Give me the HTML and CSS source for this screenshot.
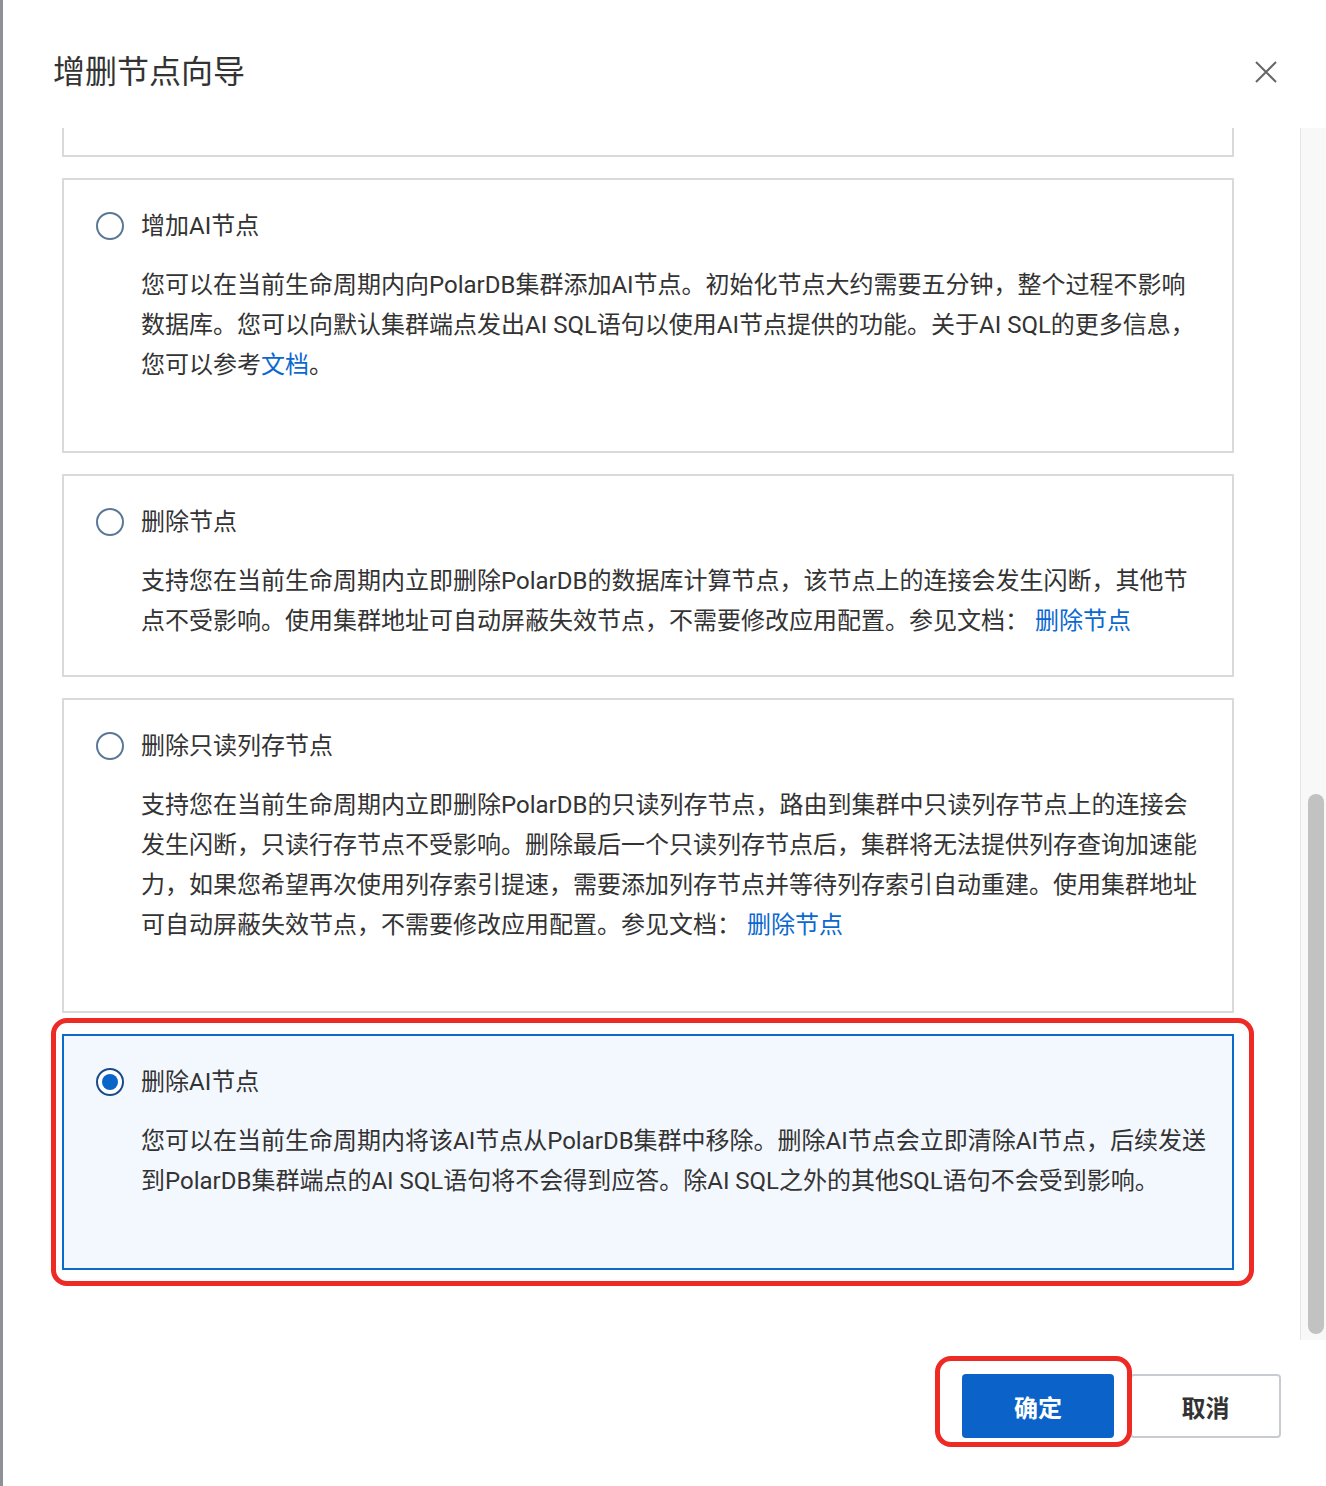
FILE: index.html
```html
<!DOCTYPE html>
<html lang="zh-CN">
<head>
    <meta charset="UTF-8">
    <meta name="viewport" content="width=device-width, initial-scale=1.0">
    <title>增删节点向导</title>
    <link rel="stylesheet" href="styles.css">
</head>
<body>
    <div class="modal">
        <div class="modal-header">
            <h2>增删节点向导</h2>
            <button class="close-btn" aria-label="关闭">
                <svg width="22" height="22" viewBox="0 0 22 22"><path d="M1 1L21 21M21 1L1 21" stroke="#666" stroke-width="2" fill="none"/></svg>
            </button>
        </div>

        <div class="modal-body">
            <div class="option-list">
                <div class="option tall">
                    <div class="option-title"><span class="radio"></span>增加只读列存节点</div>
                    <p class="option-desc">支持您在当前生命周期内为PolarDB集群添加只读列存节点，用于加速复杂查询。<br>新增节点不影响现有节点的连接。</p>
                </div>

                <div class="option tall">
                    <div class="option-title"><span class="radio"></span>增加AI节点</div>
                    <p class="option-desc">您可以在当前生命周期内向PolarDB集群添加AI节点。初始化节点大约需要五分钟，整个过程不影响<br>数据库。您可以向默认集群端点发出AI SQL语句以使用AI节点提供的功能。关于AI SQL的更多信息，<br>您可以参考<a href="#">文档</a>。</p>
                </div>

                <div class="option">
                    <div class="option-title"><span class="radio"></span>删除节点</div>
                    <p class="option-desc">支持您在当前生命周期内立即删除PolarDB的数据库计算节点，该节点上的连接会发生闪断，其他节<br>点不受影响。使用集群地址可自动屏蔽失效节点，不需要修改应用配置。参见文档： <a href="#">删除节点</a></p>
                </div>

                <div class="option tall">
                    <div class="option-title"><span class="radio"></span>删除只读列存节点</div>
                    <p class="option-desc">支持您在当前生命周期内立即删除PolarDB的只读列存节点，路由到集群中只读列存节点上的连接会<br>发生闪断，只读行存节点不受影响。删除最后一个只读列存节点后，集群将无法提供列存查询加速能<br>力，如果您希望再次使用列存索引提速，需要添加列存节点并等待列存索引自动重建。使用集群地址<br>可自动屏蔽失效节点，不需要修改应用配置。参见文档： <a href="#">删除节点</a></p>
                </div>

                <div class="option tall selected">
                    <div class="option-title"><span class="radio"></span>删除AI节点</div>
                    <p class="option-desc">您可以在当前生命周期内将该AI节点从PolarDB集群中移除。删除AI节点会立即清除AI节点，后续发送<br>到PolarDB集群端点的AI SQL语句将不会得到应答。除AI SQL之外的其他SQL语句不会受到影响。</p>
                    <div class="mark mark-card"></div>
                </div>
            </div>

            <div class="scrollbar"><div class="scroll-thumb"></div></div>
        </div>

        <div class="modal-footer">
            <div class="btn-wrap">
                <button class="btn btn-primary">确定</button>
                <div class="mark mark-btn"></div>
            </div>
            <button class="btn btn-default">取消</button>
        </div>
    </div>
</body>
</html>
```

FILE: styles.css
```css
body {
    margin: 0;
    background: #8e9196;
    font-family: Roboto, "Noto Sans CJK SC", sans-serif;
    color: #333;
    overflow: hidden;
}
.modal {
    margin-left: 3px;
    width: 1323px;
    height: 1486px;
    background: #fff;
    display: flex;
    flex-direction: column;
}
.modal-header {
    height: 128px;
    box-sizing: border-box;
    padding: 16px 49px 0 50px;
    display: flex;
    align-items: center;
    justify-content: space-between;
    flex-shrink: 0;
}
.modal-header h2 {
    margin: 0 0 1px;
    font-size: 32px;
    font-weight: 400;
    line-height: 40px;
    color: #333;
}
.close-btn {
    background: none;
    border: none;
    padding: 0;
    width: 22px;
    height: 22px;
    cursor: pointer;
}
.close-btn svg {
    display: block;
}
.modal-body {
    height: 1212px;
    display: flex;
    flex-shrink: 0;
}
.option-list {
    flex: 1;
    overflow: hidden;
    display: flex;
    flex-direction: column;
    justify-content: flex-end;
    gap: 21px;
    padding: 0 66px 70px 59px;
}
.option {
    position: relative;
    flex-shrink: 0;
    border: 2px solid #dadada;
    background: #fff;
    padding: 26px 20px 34px 32px;
}
.option.tall {
    padding-bottom: 66px;
}
.option.selected {
    border-color: #0b6bcb;
    background: #f3f8fe;
    padding-bottom: 67px;
}
.option-title {
    display: flex;
    align-items: center;
    gap: 17px;
    font-size: 24px;
    line-height: 40px;
}
.radio {
    width: 28px;
    height: 28px;
    box-sizing: border-box;
    border: 2px solid #5b7796;
    border-radius: 50%;
    background: #fff;
    display: flex;
    align-items: center;
    justify-content: center;
    flex-shrink: 0;
}
.selected .radio {
    border-color: #1a4a8a;
}
.selected .radio::after {
    content: "";
    width: 16px;
    height: 16px;
    border-radius: 50%;
    background: #0b64c8;
}
.option-desc {
    margin: 19px 0 0 45px;
    font-size: 24px;
    line-height: 40px;
}
.option-desc a {
    color: #0b68d0;
    text-decoration: none;
}
.scrollbar {
    width: 25px;
    flex-shrink: 0;
    border-left: 1px solid #e6e6e6;
    background: #f8f8f8;
    display: flex;
    flex-direction: column;
    justify-content: flex-end;
}
.scroll-thumb {
    width: 16px;
    height: 540px;
    margin: 0 0 6px 7px;
    background: #c2c2c2;
    border-radius: 8px;
}
.modal-footer {
    flex: 1;
    display: flex;
    justify-content: flex-end;
    align-items: flex-start;
    gap: 16px;
    padding: 34px 45px 0 0;
}
.btn-wrap {
    position: relative;
}
.btn {
    width: 152px;
    height: 64px;
    border-radius: 4px;
    font-family: inherit;
    font-size: 24px;
    font-weight: 700;
    cursor: pointer;
    display: block;
}
.btn-primary {
    background: #0b63c9;
    color: #fff;
    border: none;
}
.btn-default {
    width: 151px;
    background: #fff;
    color: #333;
    border: 2px solid #c8ccd2;
}
/* red highlight marks */
.mark {
    position: absolute;
    border: 5px solid #ee2a24;
    border-radius: 16px;
    pointer-events: none;
}
.mark-card {
    left: -13px;
    right: -22px;
    top: -18px;
    bottom: -18px;
}
.mark-btn {
    left: -27px;
    right: -18px;
    top: -18px;
    bottom: -9px;
    z-index: 2;
}
```
